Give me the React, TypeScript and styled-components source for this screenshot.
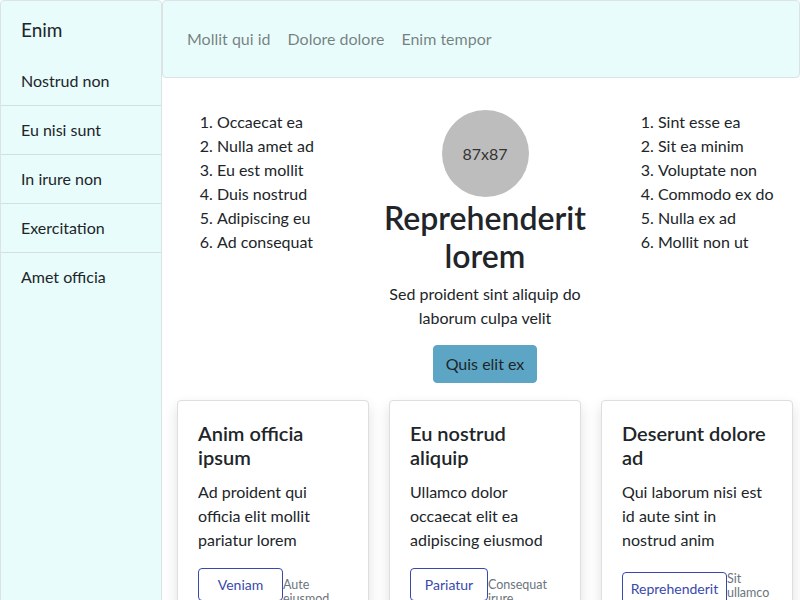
import React from "react";
import styled, { createGlobalStyle } from "styled-components";

const Global = createGlobalStyle`
  html, body { margin: 0; padding: 0; background: #fff; }
  body {
    font-family: Lato, "Noto Sans", sans-serif;
    font-size: 16px;
    line-height: 1.5;
    color: #212529;
  }
  * { box-sizing: border-box; }
`;

const Shell = styled.div`
  display: grid;
  grid-template-columns: 162px 1fr;
  min-height: 100vh;
  overflow: hidden;
`;

const Sidebar = styled.aside`
  background: #e8fcfb;
  border: 1px solid #dbe3e4;
  border-radius: 4px;
  min-height: 600px;
`;

const SideTitle = styled.div`
  font-size: 19px;
  line-height: 30px;
  padding: 14px 20px 12px;
`;

const SideItem = styled.div`
  padding: 12px 20px;
  line-height: 24px;
  border-bottom: 1px solid #d3dfe0;
  &:last-child { border-bottom: none; }
`;

const Main = styled.main`
  min-width: 0;
`;

const Navbar = styled.nav`
  height: 78px;
  background: #e8fcfb;
  border: 1px solid #dbe3e4;
  border-radius: 4px;
  display: flex;
  align-items: center;
  gap: 17px;
  padding: 0 0 0 24px;
`;

const NavLink = styled.a`
  color: rgba(0, 0, 0, 0.5);
  text-decoration: none;
  font-size: 16px;
  line-height: 24px;
`;

const Content = styled.div`
  padding: 32px 7px 0 15px;
`;

const Hero = styled.section`
  display: grid;
  grid-template-columns: 175px 1fr 175px;
  gap: 20px;
`;

const List = styled.ol`
  margin: 0;
  padding-left: 40px;
  line-height: 24px;
`;

const Center = styled.div`
  display: flex;
  flex-direction: column;
  align-items: center;
  text-align: center;
`;

const Avatar = styled.div`
  width: 87px;
  height: 87px;
  border-radius: 50%;
  background: #bdbdbd;
  color: #333;
  font-size: 16px;
  display: flex;
  align-items: center;
  justify-content: center;
`;

const Heading = styled.h1`
  font-size: 32px;
  font-weight: 600;
  line-height: 1.2;
  margin: 2px 0 6px;
`;

const Lead = styled.p`
  margin: 0 0 15px;
  line-height: 24px;
`;

const PrimaryButton = styled.button`
  font-family: inherit;
  font-size: 16px;
  line-height: 24px;
  padding: 6px 12px;
  background: #5da5c4;
  border: 1px solid #5da5c4;
  border-radius: 4px;
  color: #212529;
`;

const Cards = styled.section`
  display: grid;
  grid-template-columns: repeat(3, 192px);
  gap: 20px;
  margin-top: 17px;
`;

const Card = styled.div`
  background: #fff;
  border: 1px solid #dedede;
  border-radius: 4px;
  padding: 20px;
  box-shadow: 0 6px 14px rgba(0, 0, 0, 0.12);
`;

const CardTitle = styled.h5`
  font-size: 20px;
  font-weight: 600;
  line-height: 24px;
  margin: 0 0 11px;
`;

const CardText = styled.p`
  margin: 0 0 16px;
  line-height: 24px;
`;

const Actions = styled.div`
  display: flex;
  align-items: flex-start;
`;

const OutlineButton = styled.button<{ $w: number; $top: number }>`
  flex: 0 0 auto;
  width: ${(p) => p.$w}px;
  margin-top: ${(p) => p.$top}px;
  font-family: inherit;
  font-size: 14px;
  line-height: 21px;
  padding: 5px 4px;
  background: #fff;
  color: #3949ab;
  border: 1px solid #3949ab;
  border-radius: 4px;
  white-space: nowrap;
`;

const Small = styled.small<{ $top: number }>`
  margin-top: ${(p) => p.$top}px;
  font-size: 12.5px;
  line-height: 14.4px;
  color: #6c757d;
  min-width: 0;
`;

const cards = [
  {
    title: "Anim officia ipsum",
    text: "Ad proident qui officia elit mollit pariatur lorem",
    btn: "Veniam",
    w: 85,
    bt: 0,
    small: "Aute eiusmod",
    st: 10,
  },
  {
    title: "Eu nostrud aliquip",
    text: "Ullamco dolor occaecat elit ea adipiscing eiusmod",
    btn: "Pariatur",
    w: 78,
    bt: 0,
    small: "Consequat irure",
    st: 10,
  },
  {
    title: "Deserunt dolore ad",
    text: "Qui laborum nisi est id aute sint in nostrud anim",
    btn: "Reprehenderit",
    w: 105,
    bt: 4,
    small: "Sit ullamco",
    st: 4,
  },
];

export default function App() {
  return (
    <>
      <Global />
      <Shell>
        <Sidebar>
          <SideTitle>Enim</SideTitle>
          {["Nostrud non", "Eu nisi sunt", "In irure non", "Exercitation", "Amet officia"].map((t) => (
            <SideItem key={t}>{t}</SideItem>
          ))}
        </Sidebar>
        <Main>
          <Navbar>
            <NavLink href="#">Mollit qui id</NavLink>
            <NavLink href="#">Dolore dolore</NavLink>
            <NavLink href="#">Enim tempor</NavLink>
          </Navbar>
          <Content>
            <Hero>
              <List>
                {["Occaecat ea", "Nulla amet ad", "Eu est mollit", "Duis nostrud", "Adipiscing eu", "Ad consequat"].map((t) => (
                  <li key={t}>{t}</li>
                ))}
              </List>
              <Center>
                <Avatar>87x87</Avatar>
                <Heading>Reprehenderit lorem</Heading>
                <Lead>Sed proident sint aliquip do laborum culpa velit</Lead>
                <PrimaryButton>Quis elit ex</PrimaryButton>
              </Center>
              <List>
                {["Sint esse ea", "Sit ea minim", "Voluptate non", "Commodo ex do", "Nulla ex ad", "Mollit non ut"].map((t) => (
                  <li key={t}>{t}</li>
                ))}
              </List>
            </Hero>
            <Cards>
              {cards.map((c) => (
                <Card key={c.title}>
                  <CardTitle>{c.title}</CardTitle>
                  <CardText>{c.text}</CardText>
                  <Actions>
                    <OutlineButton $w={c.w} $top={c.bt}>{c.btn}</OutlineButton>
                    <Small $top={c.st}>{c.small}</Small>
                  </Actions>
                </Card>
              ))}
            </Cards>
          </Content>
        </Main>
      </Shell>
    </>
  );
}
